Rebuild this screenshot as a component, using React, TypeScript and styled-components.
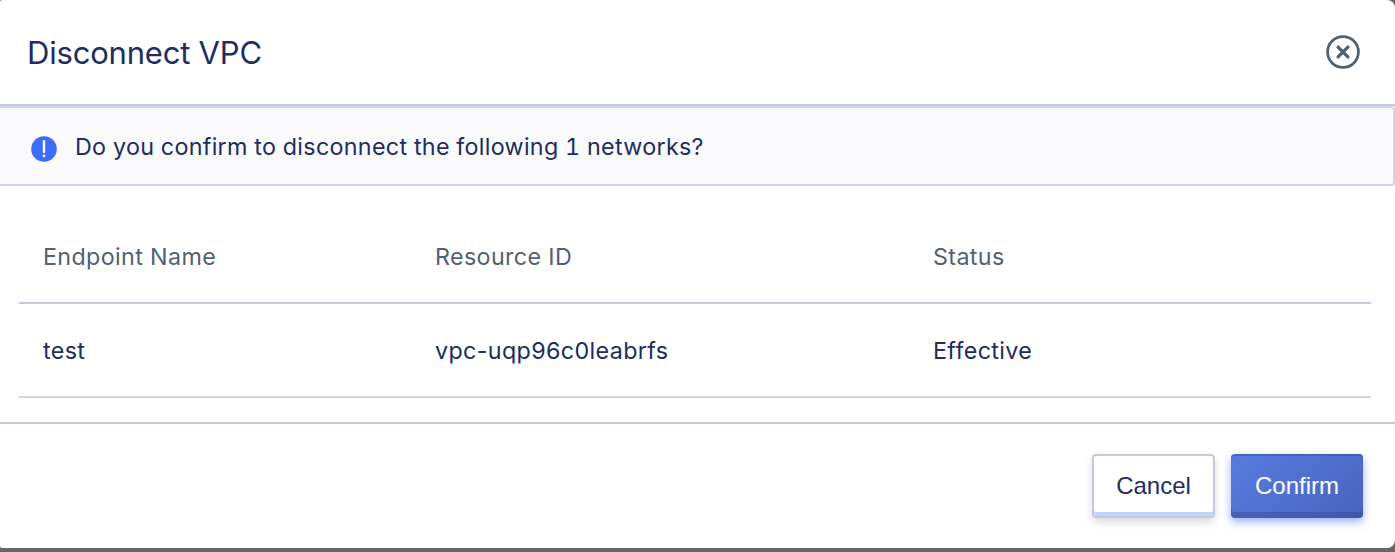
import React from "react";
import styled, { createGlobalStyle, css } from "styled-components";

const GlobalStyle = createGlobalStyle`
  *, *::before, *::after { box-sizing: border-box; }
  body { margin: 0; background: #65666c; overflow: hidden; }
`;

const Dialog = styled.section`
  width: 1395px;
  height: 548px;
  display: flex;
  flex-direction: column;
  overflow: hidden;
  background: #fff;
  border-radius: 2px 8px 8px 2px;
  color: #202d5e;
  font-family: Inter, "Liberation Sans", sans-serif;
  font-size: 23.3px;
  line-height: 32px;
`;

const Header = styled.header`
  flex: none;
  height: 106px;
  padding: 0 35px 0 27px;
  display: flex;
  align-items: center;
  justify-content: space-between;
  border-bottom: 2px solid #c4cad9;
`;

const Title = styled.h1`
  margin: 0;
  padding-top: 1px;
  font-size: 31px;
  line-height: 40px;
  font-weight: 400;
  letter-spacing: -0.2px;
`;

const CloseButton = styled.button`
  width: 34px;
  height: 34px;
  padding: 0;
  border: 0;
  background: none;
  color: #535f75;
  svg { display: block; }
`;

const Notice = styled.div`
  flex: none;
  height: 80px;
  padding: 2px 31px 0;
  display: flex;
  align-items: center;
  gap: 18px;
  background: #fafafc;
  border: 2px solid #d2d5e8;
  border-left: 0;
  border-radius: 0 4px 4px 0;
`;

const NoticeIcon = styled.svg`
  flex: none;
  margin-top: 4px;
`;

const NoticeText = styled.p`
  margin: 0;
  font-variant-numeric: tabular-nums;
  letter-spacing: 0.3px;
`;

const Table = styled.table`
  flex: none;
  width: 1352px;
  margin: 26px 0 0 19px;
  border-collapse: separate;
  border-spacing: 0;
  table-layout: fixed;
`;

const Column = styled.col<{ $width: number }>`
  width: ${(p) => p.$width}px;
`;

const cell = css`
  padding: 0 24px;
  text-align: left;
  font-weight: 400;
  letter-spacing: 0.36px;
`;

const HeadCell = styled.th`
  ${cell}
  height: 92px;
  color: #535f75;
  border-bottom: 2px solid #c5c9dc;
`;

const Cell = styled.td`
  ${cell}
  height: 94px;
  padding-top: 2px;
  border-bottom: 2px solid #d2d5e8;
`;

const Footer = styled.footer`
  flex: 1;
  margin-top: 24px;
  padding: 30px 32px 0;
  display: flex;
  align-items: flex-start;
  justify-content: flex-end;
  gap: 16px;
  border-top: 2px solid #c4cad9;
`;

const Button = styled.button<{ $primary?: boolean }>`
  width: ${(p) => (p.$primary ? 132 : 123)}px;
  height: 64px;
  padding: 0;
  border-radius: 4px;
  font: 400 24px/32px "Liberation Sans", Arial, sans-serif;
  ${(p) =>
    p.$primary
      ? css`
          border: 0;
          color: #fff;
          background: linear-gradient(135deg, #587be0, #4865bd);
          box-shadow: inset 0 -6px 0 rgba(50, 70, 140, 0.4),
            inset 0 2px 0 rgba(50, 70, 140, 0.4),
            0 4px 8px rgba(60, 96, 230, 0.5);
        `
      : css`
          border: 2px solid #c4cad9;
          color: #202d5e;
          background: #fff;
          box-shadow: inset 0 -4px 0 #c3d2f8, 0 4px 8px rgba(0, 0, 0, 0.15);
        `}
`;

const rows = [{ name: "test", id: "vpc-uqp96c0leabrfs", status: "Effective" }];

export default function App() {
  return (
    <>
      <GlobalStyle />
      <Dialog>
        <Header>
          <Title>Disconnect VPC</Title>
          <CloseButton aria-label="Close">
            <svg width="34" height="34" viewBox="0 0 34 34" fill="none" stroke="currentColor">
              <circle cx="17" cy="17" r="15.4" strokeWidth="2.8" />
              <path
                d="M12.1 12.1l9.8 9.8M21.9 12.1l-9.8 9.8"
                strokeWidth="3.3"
                strokeLinecap="round"
              />
            </svg>
          </CloseButton>
        </Header>
        <Notice>
          <NoticeIcon width="26" height="26" viewBox="0 0 26 26">
            <circle cx="13" cy="13" r="12.8" fill="#3d6cf9" />
            <path d="M13 5.3v10.6" stroke="#fff" strokeWidth="2.4" strokeLinecap="round" />
            <circle cx="13" cy="19.8" r="1.4" fill="#fff" />
          </NoticeIcon>
          <NoticeText>Do you confirm to disconnect the following 1 networks?</NoticeText>
        </Notice>
        <Table>
          <colgroup>
            <Column $width={392} />
            <Column $width={498} />
            <Column $width={462} />
          </colgroup>
          <thead>
            <tr>
              <HeadCell>Endpoint Name</HeadCell>
              <HeadCell>Resource ID</HeadCell>
              <HeadCell>Status</HeadCell>
            </tr>
          </thead>
          <tbody>
            {rows.map((r) => (
              <tr key={r.id}>
                <Cell>{r.name}</Cell>
                <Cell>{r.id}</Cell>
                <Cell>{r.status}</Cell>
              </tr>
            ))}
          </tbody>
        </Table>
        <Footer>
          <Button>Cancel</Button>
          <Button $primary>Confirm</Button>
        </Footer>
      </Dialog>
    </>
  );
}
